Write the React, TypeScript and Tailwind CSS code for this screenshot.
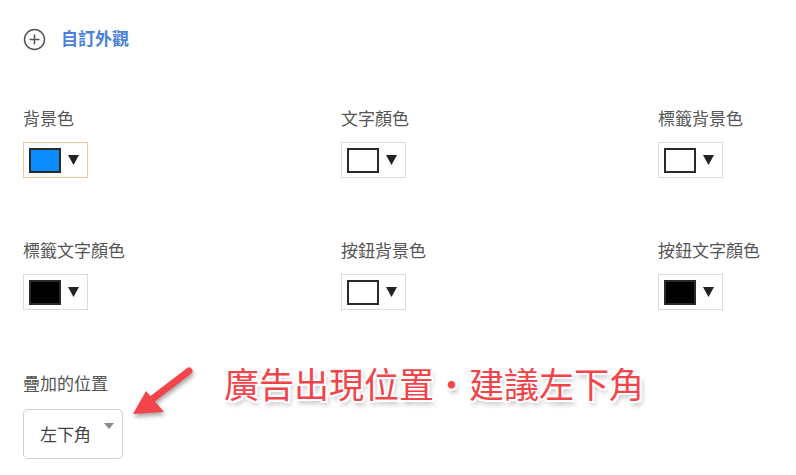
import React from "react";

const FONT = { fontFamily: '"Noto Sans CJK TC", "Noto Sans", sans-serif' };

function Tri() {
  return (
    <svg width="11" height="10" viewBox="0 0 11 10" className="block">
      <polygon points="0,0 11,0 5.5,10" fill="#222" />
    </svg>
  );
}

function Swatch({ color, focused }: { color: string; focused?: boolean }) {
  return (
    <div
      className={`w-[65px] h-[36px] border flex items-center pl-[5px] ${
        focused ? "border-[#f0c89c]" : "border-[#dcdcdc]"
      }`}
    >
      <div className="w-[32px] h-[25px] border-2 border-[#2a2a2a]" style={{ background: color }} />
      <div className="ml-[7px]">
        <Tri />
      </div>
    </div>
  );
}

function Field({ label, color, focused }: { label: string; color: string; focused?: boolean }) {
  return (
    <div className="flex flex-col">
      <div className="h-[24px] leading-[24px] text-[17px] text-[#555]">{label}</div>
      <div className="mt-[12px]">
        <Swatch color={color} focused={focused} />
      </div>
    </div>
  );
}

export default function App() {
  return (
    <div className="relative w-[796px] h-[475px] bg-white overflow-hidden pl-[23px]" style={FONT}>
      <div className="pt-[26px] flex items-center h-[50px]">
        <svg width="23" height="23" viewBox="0 0 23 23" className="mt-[2px]">
          <circle cx="11.5" cy="11.5" r="10" fill="none" stroke="#555" strokeWidth="1.5" />
          <path d="M11.5 6.5v10M6.5 11.5h10" stroke="#555" strokeWidth="1.5" />
        </svg>
        <span className="ml-[15px] text-[17px] font-semibold text-[#4a7fdc] leading-[24px]">自訂外觀</span>
      </div>

      <div className="mt-[56px] grid grid-cols-[318px_317px_auto] gap-y-[60px]">
        <Field label="背景色" color="#0a8cff" focused />
        <Field label="文字顏色" color="#ffffff" />
        <Field label="標籤背景色" color="#ffffff" />
        <Field label="標籤文字顏色" color="#000000" />
        <Field label="按鈕背景色" color="#ffffff" />
        <Field label="按鈕文字顏色" color="#000000" />
      </div>

      <div className="mt-[61px] flex flex-col">
        <div className="h-[24px] leading-[24px] text-[17px] text-[#555]">疊加的位置</div>
        <div className="mt-[14px] relative w-[100px] h-[50px] border border-[#cfcfcf] rounded-[5px] flex items-center pl-[16px]">
          <span className="text-[17px] text-[#444]">左下角</span>
          <svg width="10" height="6" viewBox="0 0 10 6" className="absolute right-[8px] top-[13px]">
            <polygon points="0,0 10,0 5,6" fill="#8a8a8a" />
          </svg>
        </div>
      </div>

      <svg
        width="80"
        height="70"
        viewBox="0 0 80 70"
        className="absolute left-[125px] top-[358px]"
        style={{ filter: "drop-shadow(1px 3px 2px rgba(0,0,0,0.35))" }}
      >
        <line x1="64" y1="13" x2="26" y2="42" stroke="#f2444a" strokeWidth="7" strokeLinecap="round" />
        <polygon points="8,56 21,33 39,54" fill="#f2444a" />
      </svg>

      <div
        className="absolute left-[224px] top-[359px] text-[35px] leading-[48px] text-[#f2444a] whitespace-nowrap"
        style={{
          textShadow:
            "2px 0 0 #fff, -2px 0 0 #fff, 0 2px 0 #fff, 0 -2px 0 #fff, 2px 2px 0 #fff, -2px -2px 0 #fff, 2px -2px 0 #fff, -2px 2px 0 #fff, 2px 4px 5px rgba(0,0,0,0.35)",
        }}
      >
        廣告出現位置・建議左下角
      </div>
    </div>
  );
}
